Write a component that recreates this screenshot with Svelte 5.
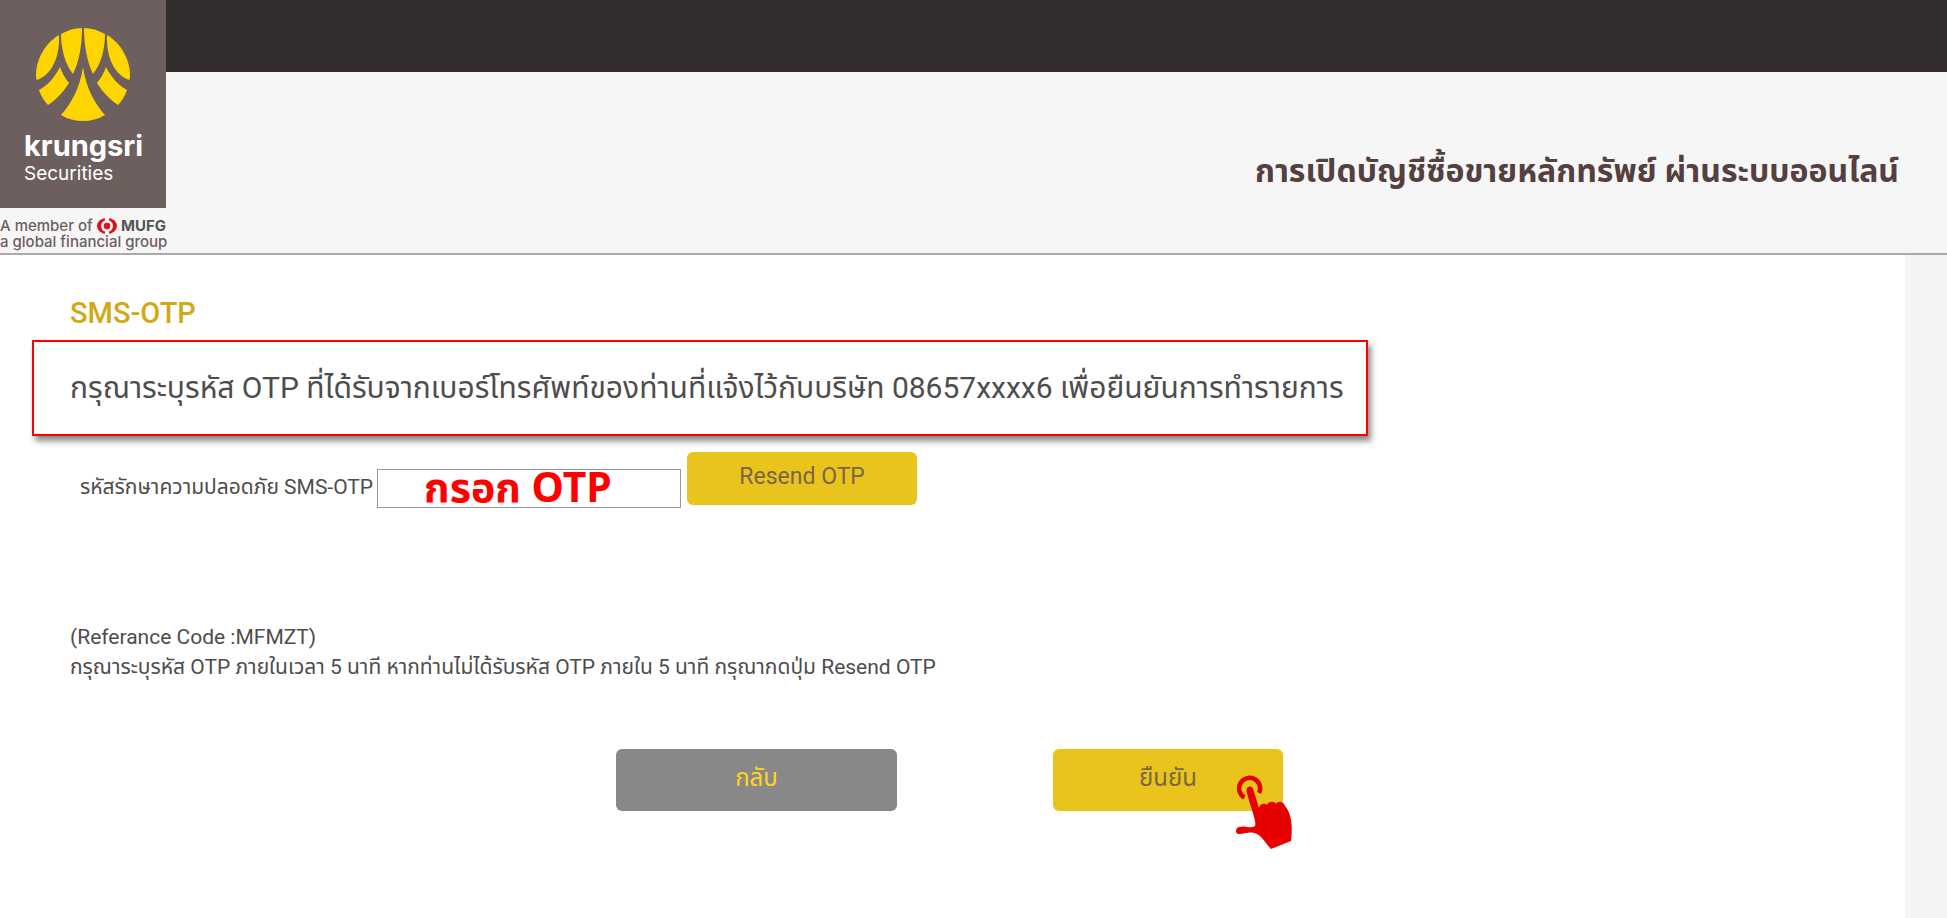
<script>
  let otp = $state('กรอก OTP');
</script>

<div class="page">
  <header>
    <div class="topbar"></div>
    <div class="brand">
      <div class="brand-box">
        <svg class="mark" viewBox="0 0 94 94" aria-hidden="true">
          <g fill="#ffd500">
            <path d="M23 7 C9 15 0 32 0 47 C0 49 0 51 1 52 C14 47 24 32 23 7Z" />
            <path d="M25 6 C32 2 39 0 46 0 C46 17 43 34 37 46 C29 36 25 21 25 6Z" />
            <path d="M69 6 C62 2 55 0 48 0 C48 17 51 34 57 46 C65 36 69 21 69 6Z" />
            <path d="M71 7 C85 15 94 32 94 47 C94 49 94 51 93 52 C80 47 70 32 71 7Z" />
            <path d="M24 39 C19 49 12 57 3 62 C5 68 8 73 12 77 C21 71 28 63 33 55 C29 50 26 45 24 39Z" />
            <path d="M70 39 C75 49 82 57 91 62 C89 68 86 73 82 77 C73 71 66 63 61 55 C65 50 68 45 70 39Z" />
            <path d="M47 39 C44 60 35 76 25 87 C38 95 56 95 69 87 C59 76 50 60 47 39Z" />
          </g>
        </svg>
        <strong>krungsri</strong>
        <span>Securities</span>
      </div>
      <p class="member">
        <span class="line">A member of
          <svg viewBox="0 0 20 16" aria-hidden="true">
            <ellipse cx="10" cy="8" rx="10" ry="8" fill="#e01020" />
            <circle cx="10" cy="8" r="6" fill="#f6f6f6" />
            <path d="M8 0H12V3H8ZM8 13H12V16H8Z" fill="#f6f6f6" />
            <circle cx="10" cy="8" r="3.300" fill="#e01020" />
          </svg>
          <b>MUFG</b></span>
        <span class="line">a global financial group</span>
      </p>
    </div>
    <h1>การเปิดบัญชีซื้อขายหลักทรัพย์ ผ่านระบบออนไลน์</h1>
  </header>

  <main>
    <h2>SMS-OTP</h2>
    <p class="notice">กรุณาระบุรหัส OTP ที่ได้รับจากเบอร์โทรศัพท์ของท่านที่แจ้งไว้กับบริษัท 08657xxxx6 เพื่อยืนยันการทำรายการ</p>
    <div class="otp-row">
      <label for="otp">รหัสรักษาความปลอดภัย SMS-OTP</label>
      <input id="otp" type="text" bind:value={otp} />
      <button type="button" class="resend">Resend OTP</button>
    </div>
    <p class="info">(Referance Code :MFMZT)<br />กรุณาระบุรหัส OTP ภายในเวลา 5 นาที หากท่านไม่ได้รับรหัส OTP ภายใน 5 นาที กรุณากดปุ่ม Resend OTP</p>
    <div class="actions">
      <button type="button" class="back">กลับ</button>
      <button type="button" class="confirm">ยืนยัน
        <svg class="pointer" viewBox="0 0 58 74" aria-hidden="true">
          <path fill="none" stroke="#e60000" stroke-width="4.500" d="M8.500 22.500A10.500 10.500 0 1 1 23 18" />
          <path fill="#e60000" d="M10.500 16C10 10.500 16.500 10 17.500 15L23 33C24 28 29 28 31 30C32 26 39 26 40 29C42 25 48 27 49 31C55 38 57 49 55 66L35 74C32 71 29 66 25 62C17 54 10 59 3 59C-1 59-1 53 3 52C9 50 14 54 19 51C21 47 14 31 10.500 16Z" />
        </svg>
      </button>
    </div>
  </main>
</div>

<style>
  :global(body) {
    margin: 0;
    background: #f4f4f2;
    color: #4d4d4d;
  }
  .page {
    min-height: 100vh;
    display: flex;
    flex-direction: column;
    font-family: Roboto, "Noto Sans Thai", "Open Sans", sans-serif;
  }
  header {
    display: grid;
    grid-template: 72px 181px / 166px 1fr;
    background: #f6f6f6;
    border-bottom: 2px solid #aaa;
  }
  .topbar { grid-area: 1 / 1 / 2 / 3; background: #332c2c; }
  .brand { grid-area: 1 / 1 / 3 / 2; }
  .brand-box {
    height: 208px;
    box-sizing: border-box;
    padding: 28px 24px 0;
    background: #6d5f5e;
    color: #fff;
    display: flex;
    flex-direction: column;
    font-family: Inter, sans-serif;
  }
  .mark { width: 94px; height: 94px; margin-left: 12px; }
  .brand-box strong { font-size: 29px; line-height: 36px; margin-top: 6px; }
  .brand-box span { font-size: 19px; line-height: 20px; }
  .member { margin: 10px 0 0; font: 500 15px/16px Inter, sans-serif; color: #6d5f5e; }
  .line { display: flex; justify-content: space-between; align-items: center; white-space: nowrap; }
  .line svg { width: 20px; height: 16px; }
  .line b { color: #555; }
  h1 {
    grid-area: 2 / 2 / 3 / 3;
    margin: 0;
    padding: 16px 48px 0 0;
    align-self: center;
    text-align: right;
    font-size: 32px;
    line-height: 48px;
    color: #54403e;
  }
  main { flex: 1; margin-right: 42px; padding: 34px 32px 0; background: #fff; }
  h2 { margin: 0 38px; font-size: 29px; line-height: 48px; font-weight: 500; color: #d0a915; }
  .notice {
    width: fit-content;
    margin: 3px 0 0;
    padding: 21px 22px 21px 36px;
    border: 2px solid #f00;
    box-shadow: 3px 5px 6px #0007;
    font-size: 30px;
    line-height: 50px;
  }
  .otp-row { display: flex; align-items: flex-start; margin: 16px 0 0 48px; }
  label { font-size: 21px; line-height: 30px; margin-top: 20px; padding-right: 4px; white-space: nowrap; }
  input {
    width: 304px; height: 39px; margin: 17px 6px 0 0; padding: 0 0 0 46px;
    box-sizing: border-box; border: 1px solid #999; background: #fff;
    font: 700 41px/37px "Noto Sans", "Noto Sans Thai", "Open Sans", sans-serif; color: #f00;
  }
  button { border: 0; padding: 0; border-radius: 6px; font: inherit; font-size: 23px; line-height: 30px; }
  .resend { width: 230px; height: 53px; padding-bottom: 3px; background: #e8c41c; color: #7b6546; }
  .info { margin: 114px 38px 0; font-size: 21px; line-height: 30px; }
  .actions { display: flex; gap: 156px; margin: 67px 0 0 584px; }
  .back, .confirm { height: 62px; padding-bottom: 4px; font-size: 24px; }
  .back { width: 281px; background: #888; color: #ffd51c; }
  .confirm { position: relative; width: 230px; background: #e8c41c; color: #7b6546; }
  .pointer { position: absolute; left: 183px; top: 26px; width: 58px; height: 74px; }
</style>
